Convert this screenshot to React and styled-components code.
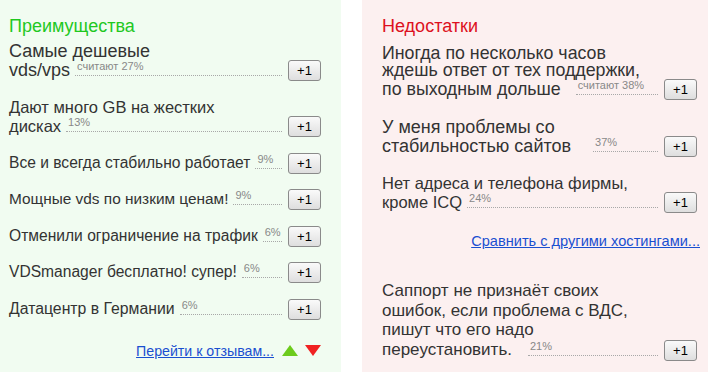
import React from 'react';
import styled, { createGlobalStyle } from 'styled-components';

const pros = [
  { lines: ['Самые дешевые', 'vds/vps'], pct: 'считают 27%', size: 18, lh: 17, gap: 16.5 },
  { lines: ['Дают много GB на жестких', 'дисках'], pct: '13%', size: 16.5, lh: 18.5, gap: 15.5 },
  { lines: ['Все и всегда стабильно работает'], pct: '9%', size: 15.6, gap: 15.5 },
  { lines: ['Мощные vds по низким ценам!'], pct: '9%', size: 15.4, gap: 15.5 },
  { lines: ['Отменили ограничение на трафик'], pct: '6%', size: 15.6, gap: 15.5 },
  { lines: ['VDSmanager бесплатно! супер!'], pct: '6%', size: 15.6, gap: 15.5 },
  { lines: ['Датацентр в Германии'], pct: '6%', size: 15.8 },
];

const cons = [
  {
    lines: ['Иногда по несколько часов', 'ждешь ответ от тех поддержки,', 'по выходным дольше'],
    pct: 'считают 38%',
    size: 17.8,
    lh: 17,
    lead: 15,
    gap: 18.5,
  },
  { lines: ['У меня проблемы со', 'стабильностью сайтов'], pct: '37%', size: 18, lh: 17, lead: 22, gap: 17 },
  { lines: ['Нет адреса и телефона фирмы,', 'кроме ICQ'], pct: '24%', size: 16.5, lh: 18 },
];

const lastCon = {
  lines: ['Саппорт не признаёт своих', 'ошибок, если проблема с ВДС,', 'пишут что его надо', 'переустановить.'],
  pct: '21%',
  size: 17,
  lh: 19.5,
  lead: 16,
};

const Item = ({ lines, pct, size, lh, lead, gap }) => {
  const head = lines.slice(0, -1);
  const last = lines[lines.length - 1];
  return (
    <StyledItem $size={size} $lh={lh} $gap={gap}>
      {head.map((l) => (
        <div key={l}>{l}</div>
      ))}
      <LastRow>
        <LastText>{last}</LastText>
        <Leader $lead={lead}>{pct}</Leader>
        <PlusButton>+1</PlusButton>
      </LastRow>
    </StyledItem>
  );
};

const App = () => {
  return (
    <>
      <GlobalStyle />
      <Page>
        <Panel $bg="#f1fcf1" $pad="16px 20px 0 9px">
          <Heading $color="#1fc81f">Преимущества</Heading>
          {pros.map((p) => (
            <Item key={p.lines[0]} {...p} />
          ))}
          <LinkRow>
            <MoreLink href="#" $size={14.2}>Перейти к отзывам...</MoreLink>
            <Arrow $up />
            <Arrow />
          </LinkRow>
        </Panel>
        <Panel $bg="#fcf0f0" $pad="16px 11px 0 20px">
          <Heading $color="#dd1020" $space={9}>
            Недостатки
          </Heading>
          {cons.map((p) => (
            <Item key={p.lines[0]} {...p} />
          ))}
          <CompareRow>
            <MoreLink href="#">Сравнить с другими хостингами...</MoreLink>
          </CompareRow>
          <Item {...lastCon} />
        </Panel>
      </Page>
    </>
  );
};

const GlobalStyle = createGlobalStyle`
  html, body {
    margin: 0;
    padding: 0;
    background: #fff;
  }
  body {
    font-family: "Liberation Sans", Arial, sans-serif;
    color: #333;
  }
`;

const Page = styled.div`
  display: grid;
  grid-template-columns: 341px 1fr;
  column-gap: 21px;
  height: 372px;
  overflow: hidden;
`;

const Panel = styled.div`
  background: ${(props) => props.$bg};
  padding: ${(props) => props.$pad};
  display: flex;
  flex-direction: column;
`;

const Heading = styled.div`
  font-size: 18px;
  line-height: 20px;
  color: ${(props) => props.$color};
  margin-bottom: ${(props) => props.$space || 7}px;
`;

const StyledItem = styled.div`
  font-size: ${(props) => props.$size}px;
  line-height: ${(props) => props.$lh || 18}px;
  margin-bottom: ${(props) => props.$gap || 0}px;
`;

const LastRow = styled.div`
  display: flex;
  align-items: flex-end;
  height: 21px;
`;

const LastText = styled.span`
  white-space: nowrap;
  line-height: 18px;
  margin-bottom: 2px;
`;

const Leader = styled.span`
  flex: 1;
  min-width: 0;
  align-self: stretch;
  display: flex;
  align-items: flex-end;
  margin: 0 6px 5px ${(props) => props.$lead || 5}px;
  padding: 0 0 3px 2px;
  border-bottom: 1px dotted #a8a8a8;
  font-size: 11px;
  line-height: 11px;
  color: #888;
  white-space: nowrap;
`;

const PlusButton = styled.button`
  flex: none;
  align-self: stretch;
  width: 33px;
  padding: 0;
  border: 1px solid #8a8a8a;
  border-radius: 3px;
  background: linear-gradient(#fafafa, #dedede);
  font-family: "Liberation Sans", Arial, sans-serif;
  font-size: 13px;
  color: #000;
`;

const LinkRow = styled.div`
  display: flex;
  justify-content: flex-end;
  align-items: center;
  gap: 7px;
  margin-top: 23px;
`;

const CompareRow = styled.div`
  display: flex;
  justify-content: flex-end;
  margin: 20.5px -3px 32px 0;
`;

const MoreLink = styled.a`
  font-size: ${(props) => props.$size || 14.6}px;
  color: #1a4fd0;
  text-decoration: underline;
`;

const Arrow = styled.span`
  width: 0;
  height: 0;
  border-left: 8px solid transparent;
  border-right: 8px solid transparent;
  ${(props) =>
    props.$up
      ? 'border-bottom: 11px solid #6ccb1c; margin-left: 1px;'
      : 'border-top: 11px solid #f02222;'}
`;

export default App;
